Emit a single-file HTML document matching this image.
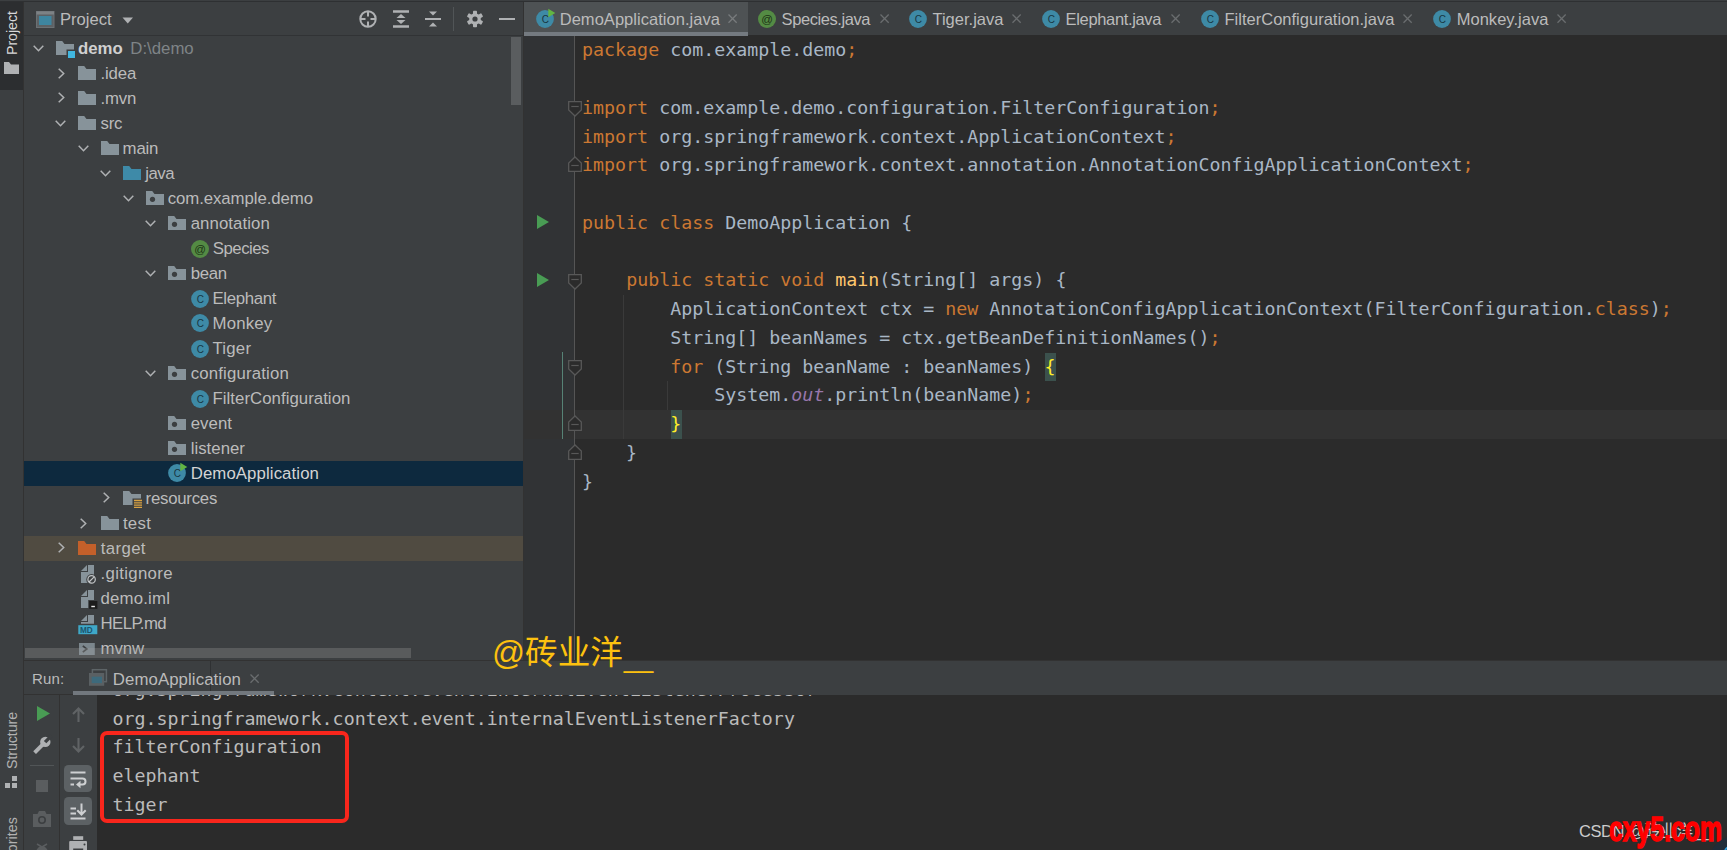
<!DOCTYPE html>
<html lang="en"><head><meta charset="utf-8"><title>DemoApplication</title>
<style>
*{box-sizing:border-box;margin:0;padding:0}
html,body{width:1727px;height:850px;overflow:hidden;background:#2b2b2b}
body{position:relative;font-family:"Liberation Sans", "Noto Sans CJK SC", sans-serif;color:#bbbbbb;font-size:16px}
.abs{position:absolute}
.t{position:absolute;white-space:pre;line-height:25px;height:25px;font-size:16.8px;color:#bbbbbb}
.code{position:absolute;white-space:pre;font-family:"DejaVu Sans Mono", "Liberation Mono", monospace;font-size:18.3px;line-height:28.8px;height:28.8px;color:#a9b7c6;left:582.1px}
.k{color:#cc7832}
.m{color:#ffc66d}
.f{color:#9876aa;font-style:italic}
.br{color:#ffef28}
svg{position:absolute;overflow:visible}
.vt{position:absolute;white-space:pre;font-size:15px;color:#b2b2b2;transform-origin:0 0;transform:rotate(-90deg);line-height:24px;height:24px}
.tab{position:absolute;white-space:pre;font-size:16.5px;color:#bbbbbb;line-height:34px;height:34px;top:2px}
</style></head>
<body>
<div class="abs" style="left:0;top:0;width:1727px;height:2px;background:#3c3f41"></div>
<div class="abs" style="left:0;top:1px;width:1727px;height:1px;background:#2e3032"></div>
<div class="abs" style="left:0;top:2px;width:24px;height:848px;background:#3c3f41"></div>
<div class="abs" style="left:0;top:2px;width:24px;height:88px;background:#2c2e30"></div>
<div class="abs" style="left:23px;top:2px;width:1px;height:848px;background:#323232"></div>
<div class="abs" style="left:24px;top:2px;width:499px;height:658px;background:#3c3f41"></div>
<div class="abs" style="left:24px;top:35px;width:499px;height:1px;background:#313335"></div>
<div class="tab" style="left:60px;top:3px;font-size:16.600px">Project</div>
<svg style="left:36px;top:11px" width="19" height="17" viewBox="0 0 19 17"><rect x="0.5" y="0.5" width="17.500" height="16" fill="#5c6164" stroke="#6c7174"/><rect x="0.5" y="0.5" width="17.500" height="3" fill="#7d8285"/><rect x="3" y="5" width="12.500" height="9" fill="#3e86a0"/></svg>
<svg style="left:122px;top:17px" width="12" height="7" viewBox="0 0 12 7"><path d="M0.5 0.5h10.5l-5.25 6z" fill="#afb1b3"/></svg>
<svg style="left:359px;top:10px" width="18" height="18" viewBox="0 0 18 18"><circle cx="9" cy="9" r="7.7" fill="none" stroke="#afb1b3" stroke-width="2"/><path d="M9 1v5.500M9 11.500v5.500M1 9h5.500M11.500 9h5.500" stroke="#afb1b3" stroke-width="2" fill="none"/></svg>
<svg style="left:393px;top:10px" width="16" height="18" viewBox="0 0 16 18"><path d="M0 1.500h16M0 16.500h16" stroke="#afb1b3" stroke-width="2.500"/><path d="M8 4l4.500 4h-9zM8 14l4.500-4h-9z" fill="#afb1b3"/></svg>
<svg style="left:425px;top:10px" width="16" height="18" viewBox="0 0 16 18"><path d="M0 9h16" stroke="#afb1b3" stroke-width="2"/><path d="M8 5.5l4-4h-8zM8 12.5l4 4h-8z" fill="#afb1b3"/></svg>
<div class="abs" style="left:453px;top:7px;width:1px;height:24px;background:#515557"></div>
<svg style="left:466px;top:10px" width="18" height="18" viewBox="0 0 18 18"><g transform="translate(9,9)"><rect x="-2" y="-8.3" width="4" height="16.6" rx="0.8" fill="#afb1b3" transform="rotate(0)"/><rect x="-2" y="-8.3" width="4" height="16.6" rx="0.8" fill="#afb1b3" transform="rotate(60)"/><rect x="-2" y="-8.3" width="4" height="16.6" rx="0.8" fill="#afb1b3" transform="rotate(120)"/><circle r="5.8" fill="#afb1b3"/><circle r="2.6" fill="#3c3f41"/></g></svg>
<div class="abs" style="left:499px;top:18px;width:16px;height:2px;background:#afb1b3"></div>
<div class="vt" style="left:-0.100px;top:55.300px;width:50px;font-size:14.100px;color:#d8d8d8">Project</div>
<svg style="left:4px;top:62px" width="15" height="12" viewBox="0 0 15 12"><path d="M0 0h5l2 2.5h8V12H0z" fill="#afb1b3"/></svg>
<div class="vt" style="left:-0.200px;top:769.300px;width:60px;font-size:14.300px;letter-spacing:-0.100px">Structure</div>
<svg style="left:5.200px;top:776px" width="13" height="13" viewBox="0 0 13 13"><rect x="7" y="0" width="5" height="5" fill="#afb1b3"/><rect x="0" y="7" width="5" height="5" fill="#afb1b3"/><rect x="7" y="7" width="5" height="5" fill="#afb1b3"/></svg>
<div class="vt" style="left:-0.200px;top:876px;width:64px;font-size:14.300px">Favorites</div>
<div class="abs" style="left:24px;top:461px;width:499px;height:25px;background:#0d293e"></div>
<div class="abs" style="left:24px;top:536px;width:499px;height:25px;background:#504b41"></div>
<svg style="left:33px;top:45px" width="11" height="7" viewBox="0 0 11 7"><path d="M0.7 0.7l4.8 5 4.8-5" fill="none" stroke="#afb1b3" stroke-width="1.5"/></svg>
<svg style="left:56px;top:41px" width="18" height="14" viewBox="0 0 18 14"><path d="M0 0h6.2l2.3 3H18v11H0z" fill="#87939a"/><rect x="10.5" y="8.5" width="9" height="9" fill="#3c3f41"/><rect x="12" y="10" width="7" height="7" fill="#40b6e0"/></svg>
<div class="t" style="left:78px;top:36px"><b style="color:#d0d0d0">demo</b><span style="color:#7f8487;margin-left:7.5px">D:\demo</span></div>
<svg style="left:58px;top:68px" width="7" height="11" viewBox="0 0 7 11"><path d="M0.7 0.7l5 4.8-5 4.8" fill="none" stroke="#afb1b3" stroke-width="1.5"/></svg>
<svg style="left:78.2px;top:66px" width="18" height="14" viewBox="0 0 18 14"><path d="M0 0h6.2l2.3 3H18v11H0z" fill="#87939a"/></svg>
<div class="t" style="left:100.5px;top:61px;color:#bbbbbb;letter-spacing:-0.158px;">.idea</div>
<svg style="left:58px;top:92px" width="7" height="11" viewBox="0 0 7 11"><path d="M0.7 0.7l5 4.8-5 4.8" fill="none" stroke="#afb1b3" stroke-width="1.5"/></svg>
<svg style="left:78.2px;top:91px" width="18" height="14" viewBox="0 0 18 14"><path d="M0 0h6.2l2.3 3H18v11H0z" fill="#87939a"/></svg>
<div class="t" style="left:100.5px;top:86px;color:#bbbbbb;letter-spacing:-0.194px;">.mvn</div>
<svg style="left:55px;top:120px" width="11" height="7" viewBox="0 0 11 7"><path d="M0.7 0.7l4.8 5 4.8-5" fill="none" stroke="#afb1b3" stroke-width="1.5"/></svg>
<svg style="left:78.2px;top:116px" width="18" height="14" viewBox="0 0 18 14"><path d="M0 0h6.2l2.3 3H18v11H0z" fill="#87939a"/></svg>
<div class="t" style="left:100.5px;top:111px;color:#bbbbbb;letter-spacing:-0.192px;">src</div>
<svg style="left:78px;top:145px" width="11" height="7" viewBox="0 0 11 7"><path d="M0.7 0.7l4.8 5 4.8-5" fill="none" stroke="#afb1b3" stroke-width="1.5"/></svg>
<svg style="left:100.7px;top:141px" width="18" height="14" viewBox="0 0 18 14"><path d="M0 0h6.2l2.3 3H18v11H0z" fill="#87939a"/></svg>
<div class="t" style="left:122.6px;top:136px;color:#bbbbbb;letter-spacing:-0.194px;">main</div>
<svg style="left:100px;top:170px" width="11" height="7" viewBox="0 0 11 7"><path d="M0.7 0.7l4.8 5 4.8-5" fill="none" stroke="#afb1b3" stroke-width="1.5"/></svg>
<svg style="left:123.2px;top:166px" width="18" height="14" viewBox="0 0 18 14"><path d="M0 0h6.2l2.3 3H18v11H0z" fill="#3e8aa8"/></svg>
<div class="t" style="left:145.3px;top:161px;color:#bbbbbb;letter-spacing:-0.499px;">java</div>
<svg style="left:123px;top:195px" width="11" height="7" viewBox="0 0 11 7"><path d="M0.7 0.7l4.8 5 4.8-5" fill="none" stroke="#afb1b3" stroke-width="1.5"/></svg>
<svg style="left:145.7px;top:191px" width="18" height="14" viewBox="0 0 18 14"><path d="M0 0h6.2l2.3 3H18v11H0z" fill="#87939a"/><circle cx="6.5" cy="8.3" r="2.6" fill="#3c3f41"/></svg>
<div class="t" style="left:167.7px;top:186px;color:#bbbbbb;letter-spacing:-0.077px;">com.example.demo</div>
<svg style="left:145px;top:220px" width="11" height="7" viewBox="0 0 11 7"><path d="M0.7 0.7l4.8 5 4.8-5" fill="none" stroke="#afb1b3" stroke-width="1.5"/></svg>
<svg style="left:168.2px;top:216px" width="18" height="14" viewBox="0 0 18 14"><path d="M0 0h6.2l2.3 3H18v11H0z" fill="#87939a"/><circle cx="6.5" cy="8.3" r="2.6" fill="#3c3f41"/></svg>
<div class="t" style="left:190.7px;top:211px;color:#bbbbbb;letter-spacing:0.081px;">annotation</div>
<svg style="left:190.7px;top:240px" width="18" height="18" viewBox="0 0 18 18"><circle cx="9" cy="9" r="9" fill="#548b44"/><text x="9" y="12.700" text-anchor="middle" font-family="Liberation Sans, sans-serif" font-size="11.500" fill="#1b3314">@</text></svg>
<div class="t" style="left:212.8px;top:236px;color:#bbbbbb;letter-spacing:-0.500px;">Species</div>
<svg style="left:145px;top:270px" width="11" height="7" viewBox="0 0 11 7"><path d="M0.7 0.7l4.8 5 4.8-5" fill="none" stroke="#afb1b3" stroke-width="1.5"/></svg>
<svg style="left:168.2px;top:266px" width="18" height="14" viewBox="0 0 18 14"><path d="M0 0h6.2l2.3 3H18v11H0z" fill="#87939a"/><circle cx="6.5" cy="8.3" r="2.6" fill="#3c3f41"/></svg>
<div class="t" style="left:190.7px;top:261px;color:#bbbbbb;letter-spacing:-0.286px;">bean</div>
<svg style="left:190.7px;top:290px" width="18" height="18" viewBox="0 0 18 18"><circle cx="9" cy="9" r="8.900" fill="#3e8aa6"/><text x="9.3" y="12.8" text-anchor="middle" font-family="Liberation Sans, sans-serif" font-size="10" fill="#183642">C</text></svg>
<div class="t" style="left:212.5px;top:286px;color:#bbbbbb;letter-spacing:-0.344px;">Elephant</div>
<svg style="left:190.7px;top:314px" width="18" height="18" viewBox="0 0 18 18"><circle cx="9" cy="9" r="8.900" fill="#3e8aa6"/><text x="9.3" y="12.8" text-anchor="middle" font-family="Liberation Sans, sans-serif" font-size="10" fill="#183642">C</text></svg>
<div class="t" style="left:212.5px;top:311px;color:#bbbbbb;letter-spacing:0.189px;">Monkey</div>
<svg style="left:190.7px;top:340px" width="18" height="18" viewBox="0 0 18 18"><circle cx="9" cy="9" r="8.900" fill="#3e8aa6"/><text x="9.3" y="12.8" text-anchor="middle" font-family="Liberation Sans, sans-serif" font-size="10" fill="#183642">C</text></svg>
<div class="t" style="left:212.5px;top:336px;color:#bbbbbb;letter-spacing:0.215px;">Tiger</div>
<svg style="left:145px;top:370px" width="11" height="7" viewBox="0 0 11 7"><path d="M0.7 0.7l4.8 5 4.8-5" fill="none" stroke="#afb1b3" stroke-width="1.5"/></svg>
<svg style="left:168.2px;top:366px" width="18" height="14" viewBox="0 0 18 14"><path d="M0 0h6.2l2.3 3H18v11H0z" fill="#87939a"/><circle cx="6.5" cy="8.3" r="2.6" fill="#3c3f41"/></svg>
<div class="t" style="left:190.7px;top:361px;color:#bbbbbb;letter-spacing:0.162px;">configuration</div>
<svg style="left:190.7px;top:390px" width="18" height="18" viewBox="0 0 18 18"><circle cx="9" cy="9" r="8.900" fill="#3e8aa6"/><text x="9.3" y="12.8" text-anchor="middle" font-family="Liberation Sans, sans-serif" font-size="10" fill="#183642">C</text></svg>
<div class="t" style="left:212.5px;top:386px;color:#bbbbbb;letter-spacing:0.041px;">FilterConfiguration</div>
<svg style="left:168.2px;top:416px" width="18" height="14" viewBox="0 0 18 14"><path d="M0 0h6.2l2.3 3H18v11H0z" fill="#87939a"/><circle cx="6.5" cy="8.3" r="2.6" fill="#3c3f41"/></svg>
<div class="t" style="left:190.7px;top:411px;color:#bbbbbb;letter-spacing:0.067px;">event</div>
<svg style="left:168.2px;top:441px" width="18" height="14" viewBox="0 0 18 14"><path d="M0 0h6.2l2.3 3H18v11H0z" fill="#87939a"/><circle cx="6.5" cy="8.3" r="2.6" fill="#3c3f41"/></svg>
<div class="t" style="left:190.7px;top:436px;color:#bbbbbb;letter-spacing:0.024px;">listener</div>
<svg style="left:168.2px;top:464px" width="18" height="18" viewBox="0 0 18 18"><circle cx="9" cy="9" r="8.900" fill="#3e8aa6"/><text x="9.3" y="12.8" text-anchor="middle" font-family="Liberation Sans, sans-serif" font-size="10" fill="#183642">C</text><path d="M12.300 -1.300v8.600l7-4.300z" fill="#62b543"/></svg>
<div class="t" style="left:190.7px;top:461px;color:#d4d4d4;letter-spacing:0.096px;">DemoApplication</div>
<svg style="left:103px;top:492px" width="7" height="11" viewBox="0 0 7 11"><path d="M0.7 0.7l5 4.8-5 4.8" fill="none" stroke="#afb1b3" stroke-width="1.5"/></svg>
<svg style="left:123.2px;top:491px" width="18" height="14" viewBox="0 0 18 14"><path d="M0 0h6.2l2.3 3H18v11H0z" fill="#87939a"/><rect x="9.5" y="7.5" width="10" height="10" fill="#3c3f41"/><path d="M11 9.5h8M11 11.8h8M11 14.1h8M11 16.4h8" stroke="#d9a343" stroke-width="1.3"/></svg>
<div class="t" style="left:145.6px;top:486px;color:#bbbbbb;letter-spacing:-0.243px;">resources</div>
<svg style="left:80px;top:518px" width="7" height="11" viewBox="0 0 7 11"><path d="M0.7 0.7l5 4.8-5 4.8" fill="none" stroke="#afb1b3" stroke-width="1.5"/></svg>
<svg style="left:100.7px;top:516px" width="18" height="14" viewBox="0 0 18 14"><path d="M0 0h6.2l2.3 3H18v11H0z" fill="#87939a"/></svg>
<div class="t" style="left:122.9px;top:511px;color:#bbbbbb;letter-spacing:0.284px;">test</div>
<svg style="left:58px;top:542px" width="7" height="11" viewBox="0 0 7 11"><path d="M0.7 0.7l5 4.8-5 4.8" fill="none" stroke="#afb1b3" stroke-width="1.5"/></svg>
<svg style="left:78.2px;top:541px" width="18" height="14" viewBox="0 0 18 14"><path d="M0 0h6.2l2.3 3H18v11H0z" fill="#c4602a"/></svg>
<div class="t" style="left:100.8px;top:536px;color:#bbbbbb;letter-spacing:0.363px;">target</div>
<svg style="left:80.6px;top:565.0px" width="18" height="20" viewBox="0 0 18 20"><path d="M7 0h6v18H0V7h7z" fill="#87939a"/><path d="M0 6L6 0v6z" fill="#87939a"/><circle cx="10.600" cy="14.400" r="5.300" fill="#3c3f41"/><circle cx="10.600" cy="14.400" r="3.700" fill="none" stroke="#c3c6c8" stroke-width="1.200"/><path d="M8 17l5.200-5.200" stroke="#c3c6c8" stroke-width="1.200"/></svg>
<div class="t" style="left:100.5px;top:561px;color:#bbbbbb;letter-spacing:0.335px;">.gitignore</div>
<svg style="left:80.6px;top:590.0px" width="18" height="20" viewBox="0 0 18 20"><path d="M7 0h6v18H0V7h7z" fill="#87939a"/><path d="M0 6L6 0v6z" fill="#87939a"/><rect x="7.200" y="10" width="10.200" height="9.800" fill="#3c3f41"/><rect x="8.200" y="11" width="8.200" height="7.800" fill="#1c1c1c"/><rect x="10.300" y="15.800" width="3.600" height="1.400" fill="#e8e8e8"/></svg>
<div class="t" style="left:100.5px;top:586px;color:#bbbbbb;letter-spacing:0.190px;">demo.iml</div>
<svg style="left:80.6px;top:615.0px" width="18" height="20" viewBox="0 0 18 20"><path d="M7 0h6v8.700H0V7h7z" fill="#87939a"/><path d="M0 6L6 0v6z" fill="#87939a"/><rect x="-2.700" y="10.200" width="19" height="9" fill="#3fa8c8"/><text x="5.300" y="18" text-anchor="middle" font-family="Liberation Sans, sans-serif" font-size="8.200" font-weight="bold" fill="#1c556e">MD</text></svg>
<div class="t" style="left:100.5px;top:611px;color:#bbbbbb;letter-spacing:-0.579px;">HELP.md</div>
<svg style="left:79.2px;top:643.0px" width="16" height="12" viewBox="0 0 16 12"><rect width="15.800" height="12" fill="#7b868c"/><path d="M3.800 2.800l4 3.200-4 3.200" fill="none" stroke="#3c3f41" stroke-width="1.700"/></svg>
<div class="t" style="left:100.5px;top:636px;color:#bbbbbb;letter-spacing:-0.082px;">mvnw</div>
<div class="abs" style="left:511px;top:37px;width:10px;height:68px;background:#5a5d5f"></div>
<div class="abs" style="left:25px;top:647.6px;width:386px;height:10px;background:rgba(166,166,166,0.28)"></div>
<div class="abs" style="left:523px;top:2px;width:1204px;height:33px;background:#3c3f41"></div>
<div class="abs" style="left:523px;top:2px;width:1px;height:658px;background:#323232"></div>
<div class="abs" style="left:524px;top:2px;width:224px;height:34px;background:#4e5254"></div>
<div class="abs" style="left:524px;top:32px;width:224px;height:4px;background:#747a80"></div>
<svg style="left:536px;top:10px" width="18" height="18" viewBox="0 0 18 18"><circle cx="9" cy="9" r="8.900" fill="#3e8aa6"/><text x="9.3" y="12.8" text-anchor="middle" font-family="Liberation Sans, sans-serif" font-size="10" fill="#183642">C</text><path d="M12.300 -1.300v8.600l7-4.300z" fill="#62b543"/></svg>
<div class="tab" style="left:559.7px;letter-spacing:0.035px;">DemoApplication.java</div>
<svg style="left:728.4px;top:14.4px" width="9.2" height="9.2" viewBox="0 0 9.2 9.2"><path d="M0.5 0.5l8.2 8.2M8.7 0.5l-8.2 8.2" stroke="#787b7d" stroke-width="1.3" fill="none"/></svg>
<svg style="left:758px;top:10px" width="18" height="18" viewBox="0 0 18 18"><circle cx="9" cy="9" r="9" fill="#548b44"/><text x="9" y="12.700" text-anchor="middle" font-family="Liberation Sans, sans-serif" font-size="11.500" fill="#1b3314">@</text></svg>
<div class="tab" style="left:781.6px;letter-spacing:-0.422px;">Species.java</div>
<svg style="left:880.4px;top:14.4px" width="9.2" height="9.2" viewBox="0 0 9.2 9.2"><path d="M0.5 0.5l8.2 8.2M8.7 0.5l-8.2 8.2" stroke="#6a6d6f" stroke-width="1.3" fill="none"/></svg>
<svg style="left:909px;top:10px" width="18" height="18" viewBox="0 0 18 18"><circle cx="9" cy="9" r="8.900" fill="#3e8aa6"/><text x="9.3" y="12.8" text-anchor="middle" font-family="Liberation Sans, sans-serif" font-size="10" fill="#183642">C</text></svg>
<div class="tab" style="left:932.5px;letter-spacing:-0.004px;">Tiger.java</div>
<svg style="left:1012.4px;top:14.4px" width="9.2" height="9.2" viewBox="0 0 9.2 9.2"><path d="M0.5 0.5l8.2 8.2M8.7 0.5l-8.2 8.2" stroke="#6a6d6f" stroke-width="1.3" fill="none"/></svg>
<svg style="left:1042px;top:10px" width="18" height="18" viewBox="0 0 18 18"><circle cx="9" cy="9" r="8.900" fill="#3e8aa6"/><text x="9.3" y="12.8" text-anchor="middle" font-family="Liberation Sans, sans-serif" font-size="10" fill="#183642">C</text></svg>
<div class="tab" style="left:1065.6px;letter-spacing:-0.346px;">Elephant.java</div>
<svg style="left:1171.4px;top:14.4px" width="9.2" height="9.2" viewBox="0 0 9.2 9.2"><path d="M0.5 0.5l8.2 8.2M8.7 0.5l-8.2 8.2" stroke="#6a6d6f" stroke-width="1.3" fill="none"/></svg>
<svg style="left:1201px;top:10px" width="18" height="18" viewBox="0 0 18 18"><circle cx="9" cy="9" r="8.900" fill="#3e8aa6"/><text x="9.3" y="12.8" text-anchor="middle" font-family="Liberation Sans, sans-serif" font-size="10" fill="#183642">C</text></svg>
<div class="tab" style="left:1224.5px;letter-spacing:0.010px;">FilterConfiguration.java</div>
<svg style="left:1403.4px;top:14.4px" width="9.2" height="9.2" viewBox="0 0 9.2 9.2"><path d="M0.5 0.5l8.2 8.2M8.7 0.5l-8.2 8.2" stroke="#6a6d6f" stroke-width="1.3" fill="none"/></svg>
<svg style="left:1433px;top:10px" width="18" height="18" viewBox="0 0 18 18"><circle cx="9" cy="9" r="8.900" fill="#3e8aa6"/><text x="9.3" y="12.8" text-anchor="middle" font-family="Liberation Sans, sans-serif" font-size="10" fill="#183642">C</text></svg>
<div class="tab" style="left:1456.7px;letter-spacing:0.027px;">Monkey.java</div>
<svg style="left:1557.4px;top:14.4px" width="9.2" height="9.2" viewBox="0 0 9.2 9.2"><path d="M0.5 0.5l8.2 8.2M8.7 0.5l-8.2 8.2" stroke="#6a6d6f" stroke-width="1.3" fill="none"/></svg>
<div class="abs" style="left:524px;top:36px;width:51px;height:624px;background:#313335"></div>
<div class="abs" style="left:524px;top:410.1px;width:1203px;height:28.8px;background:#323232"></div>
<div class="abs" style="left:524px;top:410.1px;width:38px;height:28.8px;background:#323232"></div>
<div class="abs" style="left:574px;top:36px;width:1px;height:624px;background:#555555"></div>
<div class="abs" style="left:1045px;top:352.5px;width:11px;height:28.8px;background:#3b514d"></div>
<div class="abs" style="left:671px;top:410.1px;width:11px;height:28.8px;background:#3b514d"></div>
<div class="abs" style="left:623px;top:295px;width:1px;height:144px;background:#3a3a3a"></div>
<div class="abs" style="left:667px;top:381px;width:1px;height:29px;background:#3a3a3a"></div>
<div class="abs" style="left:561.800px;top:352px;width:1.700px;height:86.800px;background:#568275"></div>
<div class="code" style="top:35.7px"><span class="k">package </span>com.example.demo<span class="k">;</span></div>
<div class="code" style="top:93.9px"><span class="k">import </span>com.example.demo.configuration.FilterConfiguration<span class="k">;</span></div>
<div class="code" style="top:122.6px"><span class="k">import </span>org.springframework.context.ApplicationContext<span class="k">;</span></div>
<div class="code" style="top:150.9px"><span class="k">import </span>org.springframework.context.annotation.AnnotationConfigApplicationContext<span class="k">;</span></div>
<div class="code" style="top:208.5px"><span class="k">public class </span>DemoApplication {</div>
<div class="code" style="top:266.1px">    <span class="k">public static void </span><span class="m">main</span>(String[] args) {</div>
<div class="code" style="top:294.9px">        ApplicationContext ctx = <span class="k">new </span>AnnotationConfigApplicationContext(FilterConfiguration.<span class="k">class</span>)<span class="k">;</span></div>
<div class="code" style="top:323.7px">        String[] beanNames = ctx.getBeanDefinitionNames()<span class="k">;</span></div>
<div class="code" style="top:352.5px">        <span class="k">for </span>(String beanName : beanNames) <span class="br">{</span></div>
<div class="code" style="top:381.3px">            System.<span class="f">out</span>.println(beanName)<span class="k">;</span></div>
<div class="code" style="top:410.1px">        <span class="br">}</span></div>
<div class="code" style="top:438.9px">    }</div>
<div class="code" style="top:467.7px">}</div>
<svg style="left:537.0px;top:215.0px" width="12" height="14" viewBox="0 0 12 14"><path d="M0 0l12 7.0-12 7.0z" fill="#499c54"/></svg>
<svg style="left:537.0px;top:272.5px" width="12" height="14" viewBox="0 0 12 14"><path d="M0 0l12 7.0-12 7.0z" fill="#499c54"/></svg>
<svg style="left:568px;top:100.9px" width="14" height="16" viewBox="0 0 14 16"><path d="M0.700 0.700h12.600v8.300l-6.300 6-6.300-6z" fill="#2b2b2b" stroke="#585858" stroke-width="1.300"/><path d="M3.300 5.500h7.400" stroke="#585858" stroke-width="1.200"/></svg>
<svg style="left:568px;top:273.7px" width="14" height="16" viewBox="0 0 14 16"><path d="M0.700 0.700h12.600v8.300l-6.300 6-6.300-6z" fill="#2b2b2b" stroke="#585858" stroke-width="1.300"/><path d="M3.300 5.500h7.400" stroke="#585858" stroke-width="1.200"/></svg>
<svg style="left:568px;top:360.1px" width="14" height="16" viewBox="0 0 14 16"><path d="M0.700 0.700h12.600v8.300l-6.300 6-6.300-6z" fill="#2b2b2b" stroke="#585858" stroke-width="1.300"/><path d="M3.300 5.500h7.400" stroke="#585858" stroke-width="1.200"/></svg>
<svg style="left:568px;top:156.1px" width="14" height="16" viewBox="0 0 14 16"><path d="M0.700 15.300h12.600v-8.300l-6.300-6-6.300 6z" fill="#2b2b2b" stroke="#585858" stroke-width="1.300"/><path d="M3.300 9.500h7.400" stroke="#585858" stroke-width="1.200"/></svg>
<svg style="left:568px;top:415.3px" width="14" height="16" viewBox="0 0 14 16"><path d="M0.700 15.300h12.600v-8.300l-6.300-6-6.300 6z" fill="#2b2b2b" stroke="#585858" stroke-width="1.300"/><path d="M3.300 9.500h7.400" stroke="#585858" stroke-width="1.200"/></svg>
<svg style="left:568px;top:444.1px" width="14" height="16" viewBox="0 0 14 16"><path d="M0.700 15.300h12.600v-8.300l-6.300-6-6.300 6z" fill="#2b2b2b" stroke="#585858" stroke-width="1.300"/><path d="M3.300 9.500h7.400" stroke="#585858" stroke-width="1.200"/></svg>
<div class="abs" style="left:24px;top:660px;width:1703px;height:35px;background:#3c3f41"></div>
<div class="abs" style="left:24px;top:660px;width:1703px;height:1px;background:#323232"></div>
<div class="abs" style="left:24px;top:695px;width:73px;height:155px;background:#3c3f41"></div>
<div class="abs" style="left:59px;top:695px;width:1px;height:155px;background:#323232"></div>
<div class="abs" style="left:24px;top:694px;width:73px;height:1px;background:#323232"></div>
<div class="abs" style="left:210px;top:661px;width:1px;height:31px;background:#2f3133"></div>
<div class="abs" style="left:73px;top:691px;width:201px;height:4px;background:#72787e"></div>
<div class="tab" style="left:32px;top:661.800px;letter-spacing:0.153px;font-size:15px">Run:</div>
<div class="tab" style="left:112.800px;top:663px;letter-spacing:0.089px;font-size:16.800px">DemoApplication</div>
<svg style="left:89px;top:669px" width="19" height="17" viewBox="0 0 19 17"><rect x="3.400" y="0.700" width="14" height="12" fill="none" stroke="#5d6467" stroke-width="1.500"/><rect x="0" y="4" width="15.200" height="12.800" fill="#5a6063"/><rect x="2.700" y="7.700" width="10.300" height="6.400" fill="#3d6a7c"/></svg>
<svg style="left:250.4px;top:674.4px" width="9.2" height="9.2" viewBox="0 0 9.2 9.2"><path d="M0.5 0.5l8.2 8.2M8.7 0.5l-8.2 8.2" stroke="#6a6d6f" stroke-width="1.3" fill="none"/></svg>
<div class="abs" style="left:97px;top:695px;width:1630px;height:155px;background:#2b2b2b;overflow:hidden">
<div class="code" style="left:15.500px;color:#bbbbbb;top:-18.7px">org.springframework.context.event.internalEventListenerProcessor</div>
<div class="code" style="left:15.500px;color:#bbbbbb;top:9.6px">org.springframework.context.event.internalEventListenerFactory</div>
<div class="code" style="left:15.500px;color:#bbbbbb;top:38.4px">filterConfiguration</div>
<div class="code" style="left:15.500px;color:#bbbbbb;top:67.3px">elephant</div>
<div class="code" style="left:15.500px;color:#bbbbbb;top:95.7px">tiger</div>
</div>
<div class="abs" style="left:99.5px;top:731px;width:249px;height:91.5px;border:4px solid #f8261c;border-radius:7px"></div>
<svg style="left:36.5px;top:705.5px" width="13" height="15" viewBox="0 0 13 15"><path d="M0 0l13 7.5-13 7.5z" fill="#499c54"/></svg>
<svg style="left:32.900px;top:736.500px" width="18" height="18" viewBox="0 0 18 18"><path d="M1.600 15.600l8.500-8.500" stroke="#afb1b3" stroke-width="3.900"/><circle cx="12.300" cy="4.900" r="5.200" fill="#afb1b3"/><path d="M12.100 5.100l6.500-6.500" stroke="#3c3f41" stroke-width="3.400"/></svg>
<div class="abs" style="left:30px;top:765px;width:24px;height:1px;background:#515557"></div>
<div class="abs" style="left:36px;top:780px;width:12px;height:12px;background:#5a5d5f"></div>
<svg style="left:33px;top:811px" width="18" height="16" viewBox="0 0 18 16"><path d="M0 3h4.5l1.5-3h6l1.5 3h4.5v13h-18z" fill="#5a5d5f"/><circle cx="9" cy="9" r="3.2" fill="none" stroke="#3c3f41" stroke-width="1.6"/></svg>
<svg style="left:34px;top:842px" width="16" height="10" viewBox="0 0 16 10"><path d="M3 2l10 6M13 2l-10 6" stroke="#5a5d5f" stroke-width="1.5"/><ellipse cx="8" cy="9" rx="5" ry="5" fill="#5a5d5f"/></svg>
<svg style="left:71.500px;top:706.500px" width="13" height="15" viewBox="0 0 13 15"><path d="M6.500 1.500v13.500M1 7l5.500-5.500 5.500 5.500" fill="none" stroke="#606365" stroke-width="2.100"/></svg>
<svg style="left:71.500px;top:738px" width="13" height="15" viewBox="0 0 13 15"><path d="M6.500 0v13.500M1 8l5.500 5.500 5.500-5.500" fill="none" stroke="#606365" stroke-width="2.100"/></svg>
<div class="abs" style="left:64px;top:764.800px;width:28px;height:27.700px;background:#5c6164;border-radius:4.500px"></div>
<svg style="left:70px;top:771px" width="17" height="16" viewBox="0 0 17 16"><path d="M0.500 1.500h15M0.500 7.500h12a3 3 0 0 1 0 6h-3M0.500 13.500h3.500" fill="none" stroke="#ced0d2" stroke-width="2"/><path d="M10.500 9.800v7.400l-4.500-3.700z" fill="#ced0d2"/></svg>
<div class="abs" style="left:64px;top:797px;width:28px;height:27.700px;background:#5c6164;border-radius:4.500px"></div>
<svg style="left:70px;top:802.500px" width="17" height="17" viewBox="0 0 17 17"><path d="M0.500 15.500h15M0.500 5.500h5.500M0.500 10.500h5.500M11.500 0.500v10.500M7.300 7.300l4.200 4.200 4.200-4.200" fill="none" stroke="#ced0d2" stroke-width="2"/></svg>
<svg style="left:69px;top:836px" width="18" height="16" viewBox="0 0 18 16"><rect x="4.200" y="0.200" width="10" height="3.700" fill="#afb1b3"/><rect x="0.200" y="5" width="17.800" height="11" rx="1" fill="#afb1b3"/><circle cx="15.500" cy="8.500" r="1" fill="#3c3f41"/><rect x="4.200" y="12.500" width="10" height="4" fill="#3c3f41"/></svg>
<div class="abs" style="left:492px;top:630.500px;font-size:32.600px;line-height:44px;color:#fdc10f;white-space:pre">@砖业洋<span style="font-size:26.500px;position:relative;top:4px;margin-left:1px">__</span></div>
<div class="abs" style="left:1579px;top:820.300px;font-size:16.500px;line-height:22px;color:#cdcdcd;white-space:pre;letter-spacing:-0.450px">CSDN @砖业洋__</div>
<div class="abs" style="left:1608.500px;top:805.900px;font-size:35px;line-height:46px;height:46px;color:#ff0000;white-space:pre;font-weight:bold;-webkit-text-stroke:1.500px #ff0000;transform-origin:0 0;transform:scaleX(0.708)">cxy5.com</div>
<div class="abs" style="left:1709px;top:836px;width:52px;height:52px;border-radius:26px;background:#202c38"></div>
<div class="abs" style="left:1723.500px;top:846px;width:12px;height:12px;border-radius:6px;border:2px solid #2f9fe0"></div>
</body></html>
